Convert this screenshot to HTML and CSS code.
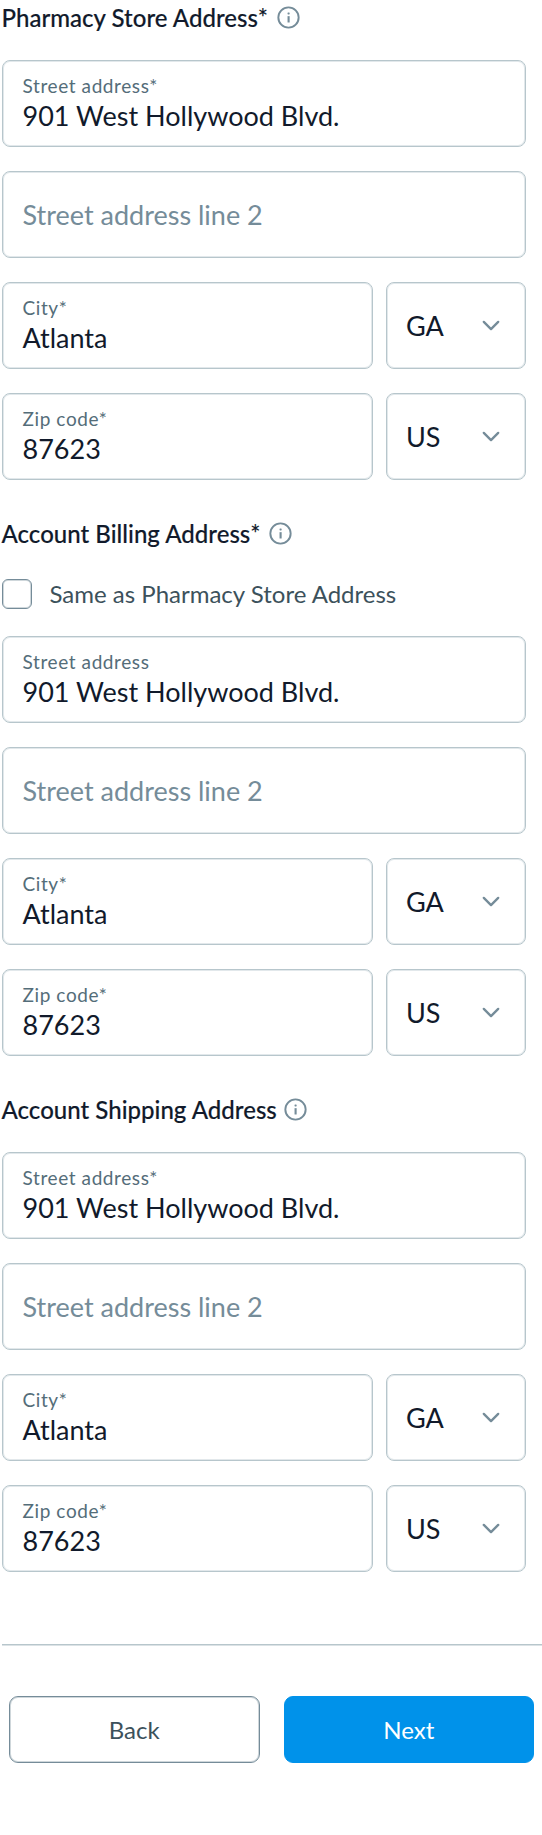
FILE: index.html
```
<!DOCTYPE html>
<html lang="en">
<head>
<meta charset="utf-8">
<title>Account addresses</title>
<link rel="stylesheet" href="styles.css">
</head>
<body>
<svg class="sprite" width="0" height="0" aria-hidden="true">
  <symbol id="info" viewBox="0 0 24 24">
    <circle cx="12" cy="12" r="10.6" fill="none" stroke="currentColor" stroke-width="2"/>
    <rect x="11" y="10.6" width="2.2" height="6.6" fill="currentColor"/>
    <rect x="11" y="6.8" width="2.2" height="2" rx=".6" fill="currentColor"/>
  </symbol>
  <symbol id="chevron" viewBox="0 0 20 12">
    <path d="M2 2l8 8 8-8" fill="none" stroke="currentColor" stroke-width="2.6" stroke-linecap="round" stroke-linejoin="round"/>
  </symbol>
</svg>
<form class="form">
  <section class="section">
    <h2 class="heading"><span>Pharmacy Store Address*</span><svg class="info"><use href="#info"/></svg></h2>
    <div class="fields">
      <div class="field"><span class="label">Street address*</span><span class="value">901 West Hollywood Blvd.</span></div>
      <div class="field"><span class="placeholder">Street address line 2</span></div>
      <div class="row">
        <div class="field"><span class="label">City*</span><span class="value">Atlanta</span></div>
        <div class="select"><span class="value">GA</span><svg class="chevron"><use href="#chevron"/></svg></div>
      </div>
      <div class="row">
        <div class="field"><span class="label">Zip code*</span><span class="value">87623</span></div>
        <div class="select"><span class="value">US</span><svg class="chevron"><use href="#chevron"/></svg></div>
      </div>
    </div>
  </section>
  <section class="section">
    <h2 class="heading"><span>Account Billing Address*</span><svg class="info"><use href="#info"/></svg></h2>
    <div class="check"><span class="box"></span><span class="check-label">Same as Pharmacy Store Address</span></div>
    <div class="fields">
      <div class="field"><span class="label">Street address</span><span class="value">901 West Hollywood Blvd.</span></div>
      <div class="field"><span class="placeholder">Street address line 2</span></div>
      <div class="row">
        <div class="field"><span class="label">City*</span><span class="value">Atlanta</span></div>
        <div class="select"><span class="value">GA</span><svg class="chevron"><use href="#chevron"/></svg></div>
      </div>
      <div class="row">
        <div class="field"><span class="label">Zip code*</span><span class="value">87623</span></div>
        <div class="select"><span class="value">US</span><svg class="chevron"><use href="#chevron"/></svg></div>
      </div>
    </div>
  </section>
  <section class="section">
    <h2 class="heading heading-optional"><span>Account Shipping Address</span><svg class="info"><use href="#info"/></svg></h2>
    <div class="fields">
      <div class="field"><span class="label">Street address*</span><span class="value">901 West Hollywood Blvd.</span></div>
      <div class="field"><span class="placeholder">Street address line 2</span></div>
      <div class="row">
        <div class="field"><span class="label">City*</span><span class="value">Atlanta</span></div>
        <div class="select"><span class="value">GA</span><svg class="chevron"><use href="#chevron"/></svg></div>
      </div>
      <div class="row">
        <div class="field"><span class="label">Zip code*</span><span class="value">87623</span></div>
        <div class="select"><span class="value">US</span><svg class="chevron"><use href="#chevron"/></svg></div>
      </div>
    </div>
  </section>
  <div class="actions">
    <button type="button" class="button">Back</button>
    <button type="button" class="button button-primary">Next</button>
  </div>
</form>
</body>
</html>
```
FILE: styles.css
```
* { box-sizing: border-box; }
body {
  margin: 0;
  background: #fff;
  color: #111a2b;
  font-family: Lato, "Liberation Sans", sans-serif;
}
.sprite { position: absolute; }
.form { padding-left: 2px; }
.section { width: 524px; margin-bottom: 36px; }
.heading {
  display: flex;
  align-items: center;
  gap: 9px;
  height: 36px;
  margin: 0 0 24px -.5px;
  font-size: 24px;
  font-weight: 500;
  line-height: 36px;
  white-space: nowrap;
  letter-spacing: .02px;
  -webkit-text-stroke: .15px currentColor;
}
.heading-optional { gap: 7px; }
.info { width: 23px; height: 23px; margin-top: -1px; color: #758c99; }
.fields { display: grid; gap: 24px; }
.row { display: grid; grid-template-columns: 371px 140px; gap: 13px; }
.field, .select {
  height: 87px;
  border: 1px solid #b7c6cc;
  box-shadow: inset 0 0 0 1px rgba(183, 198, 204, .4);
  border-radius: 8px;
  padding: 0 19.5px;
  display: flex;
}
.field { flex-direction: column; justify-content: center; }
.select { align-items: center; justify-content: space-between; padding-right: 25.5px; padding-left: 19px; }
.label {
  margin-top: -1px;
  font-size: 19px;
  line-height: 26px;
  letter-spacing: .6px;
  color: #546d79;
}
.value { font-size: 27px; line-height: 34px; }
.placeholder { font-size: 27px; line-height: 34px; color: #758c99; }
.chevron { width: 18px; height: 11px; margin-top: -1px; color: #758c99; }
.check { display: flex; align-items: center; gap: 18px; height: 30px; margin: 0 0 27px -.5px; }
.box { width: 30px; height: 30px; border: 1px solid #758c99; border-radius: 6px; box-shadow: inset 0 0 0 1px rgba(117, 140, 153, .35); }
.check-label { margin-top: -2px; font-size: 24px; color: #3c515b; }
.heading:has(+ .check) { margin-bottom: 27px; }
.actions {
  display: flex;
  gap: 24px;
  margin-top: 72px;
  padding: 51px 8px 0 7px;
  border-top: 1px solid #b7c6cc;
  box-shadow: inset 0 1px rgba(183, 198, 204, .5);
}
.button {
  flex: 1;
  height: 67px;
  border: 1px solid #758c99;
  box-shadow: inset 0 0 0 1px rgba(117, 140, 153, .35);
  border-radius: 9px;
  background: #fff;
  color: #3c515b;
  font: 400 24px Lato, "Liberation Sans", sans-serif;
}
.button-primary { border-color: #0092ea; background: #0092ea; color: #fff; box-shadow: none; }
```
